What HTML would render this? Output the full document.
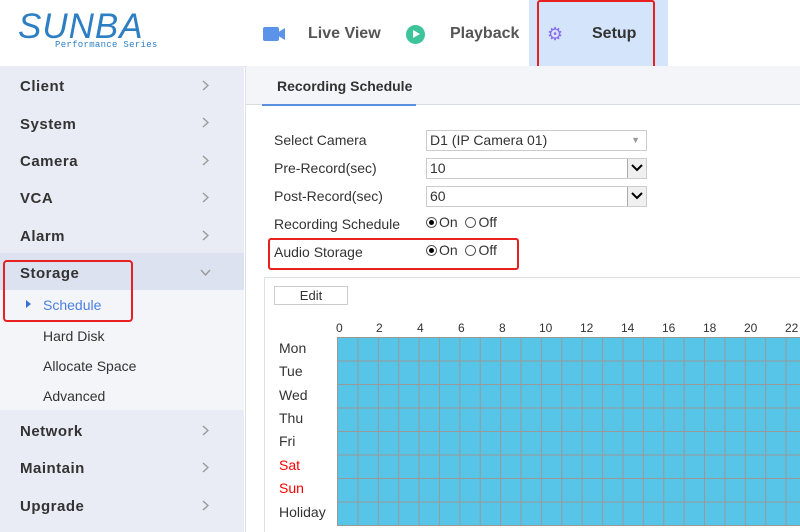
<!DOCTYPE html>
<html><head><meta charset="utf-8"><style>
*{margin:0;padding:0;box-sizing:border-box}
body{width:800px;height:532px;overflow:hidden;background:#fff;font-family:"Liberation Sans","DejaVu Sans",sans-serif;position:relative;color:#333}
.a{position:absolute;white-space:nowrap}
.nav{font-size:16px;font-weight:bold;color:#555}
.side{position:absolute;left:0;top:66px;width:244px;height:466px;background:#e9ecf4}
.si{position:absolute;left:20px;font-size:15px;font-weight:bold;color:#333;letter-spacing:.5px}
.ch{position:absolute;left:202px;width:7px;height:11px}
.sub{position:absolute;left:43px;font-size:14px;color:#333}
.lbl{position:absolute;left:274px;font-size:14px;color:#333}
.box{position:absolute;left:426px;width:221px;height:21px;border:1px solid #ccc;background:#fff;font-size:14px;padding-left:3px;line-height:19px}
.dd{position:absolute;right:0;top:0;width:19px;height:19px;border-left:1px solid #aaa;background:#f0f0f0}
.rad{display:inline-block;width:11px;height:11px;border:1px solid #555;border-radius:50%;vertical-align:-1px;position:relative;margin-right:2px}
.rad.on::after{content:"";position:absolute;left:2px;top:2px;width:5px;height:5px;border-radius:50%;background:#000}
.day{position:absolute;left:279px;font-size:14px;color:#333}
.hr{position:absolute;top:321px;font-size:12px;color:#333}
</style></head><body>
<div class="a" style="left:18px;top:7px;font-size:35px;font-style:italic;color:#2d7fc4;letter-spacing:1px">SUNBA</div>
<div class="a" style="left:55px;top:40px;font-size:9px;color:#2d7fc4;font-family:'Liberation Mono',monospace;letter-spacing:.3px">Performance Series</div>

<div class="a" style="left:263px;top:27px;width:16px;height:14px;background:#5b93ea;border-radius:2px"></div>
<div class="a" style="left:279px;top:28px;width:6px;height:12px;background:#5b93ea;clip-path:polygon(0 30%,100% 0,100% 100%,0 70%)"></div>
<div class="a nav" style="left:308px;top:25px">Live View</div>
<div class="a" style="left:406px;top:25px;width:19px;height:19px;border-radius:50%;background:#3ec39a"></div>
<div class="a" style="left:413px;top:30px;width:0;height:0;border-left:7px solid #fff;border-top:4.5px solid transparent;border-bottom:4.5px solid transparent"></div>
<div class="a nav" style="left:450px;top:25px">Playback</div>
<div class="a" style="left:529px;top:0;width:139px;height:66px;background:#d3e4fb"></div>
<div class="a" style="left:537px;top:0;width:118px;height:69px;border:2px solid #e82020;border-radius:3px"></div>
<div class="a" style="left:547px;top:24px;font-size:18px;color:#8c6df0">⚙</div>
<div class="a nav" style="left:592px;top:25px;color:#333">Setup</div>
<div class="a" style="left:0;top:66px;width:800px;height:1px;background:#e2e5ec"></div>

<div class="side"></div>
<div class="si" style="top:78px">Client</div><svg class="ch" style="top:80px" viewBox="0 0 7 11"><path d="M1 1l5 4.5L1 10" fill="none" stroke="#999" stroke-width="1.4"/></svg>
<div class="si" style="top:116px">System</div><svg class="ch" style="top:117px" viewBox="0 0 7 11"><path d="M1 1l5 4.5L1 10" fill="none" stroke="#999" stroke-width="1.4"/></svg>
<div class="si" style="top:153px">Camera</div><svg class="ch" style="top:155px" viewBox="0 0 7 11"><path d="M1 1l5 4.5L1 10" fill="none" stroke="#999" stroke-width="1.4"/></svg>
<div class="si" style="top:190px">VCA</div><svg class="ch" style="top:192px" viewBox="0 0 7 11"><path d="M1 1l5 4.5L1 10" fill="none" stroke="#999" stroke-width="1.4"/></svg>
<div class="si" style="top:228px">Alarm</div><svg class="ch" style="top:230px" viewBox="0 0 7 11"><path d="M1 1l5 4.5L1 10" fill="none" stroke="#999" stroke-width="1.4"/></svg>
<div class="a" style="left:0;top:253px;width:244px;height:37px;background:#dce2ef"></div>
<div class="a" style="left:0;top:290px;width:244px;height:120px;background:#f4f5f9"></div>
<div class="si" style="top:265px">Storage</div><svg class="a" style="left:200px;top:269px" width="11" height="7" viewBox="0 0 11 7"><path d="M1 1l4.5 5L10 1" fill="none" stroke="#999" stroke-width="1.4"/></svg>
<div class="a" style="left:26px;top:300px;width:0;height:0;border-left:5px solid #3a6fd8;border-top:4px solid transparent;border-bottom:4px solid transparent"></div>
<div class="sub" style="top:297px;color:#4a7fe0">Schedule</div>
<div class="sub" style="top:328px">Hard Disk</div>
<div class="sub" style="top:358px">Allocate Space</div>
<div class="sub" style="top:388px">Advanced</div>
<div class="a" style="left:3px;top:260px;width:130px;height:62px;border:2px solid #e82020;border-radius:4px"></div>
<div class="si" style="top:423px">Network</div><svg class="ch" style="top:425px" viewBox="0 0 7 11"><path d="M1 1l5 4.5L1 10" fill="none" stroke="#999" stroke-width="1.4"/></svg>
<div class="si" style="top:460px">Maintain</div><svg class="ch" style="top:462px" viewBox="0 0 7 11"><path d="M1 1l5 4.5L1 10" fill="none" stroke="#999" stroke-width="1.4"/></svg>
<div class="si" style="top:498px">Upgrade</div><svg class="ch" style="top:500px" viewBox="0 0 7 11"><path d="M1 1l5 4.5L1 10" fill="none" stroke="#999" stroke-width="1.4"/></svg>

<div class="a" style="left:245px;top:66px;width:555px;height:39px;background:#f4f5f9;border-bottom:1px solid #d8dce6;border-left:1px solid #dde0e8"></div>
<div class="a" style="left:277px;top:78px;font-size:14px;font-weight:bold;color:#333">Recording Schedule</div>
<div class="a" style="left:262px;top:104px;width:154px;height:2px;background:#5b8fe0"></div>
<div class="a" style="left:245px;top:105px;width:1px;height:427px;background:#dde0e8"></div>

<div class="lbl" style="top:132px">Select Camera</div>
<div class="box" style="top:130px">D1 (IP Camera 01)<span style="position:absolute;right:6px;top:0;color:#999;font-size:9px">▼</span></div>
<div class="lbl" style="top:160px">Pre-Record(sec)</div>
<div class="box" style="top:158px">10<div class="dd"><svg width="18" height="18" viewBox="0 0 18 18"><path d="M4 6l5 5 5-5" fill="none" stroke="#000" stroke-width="2"/></svg></div></div>
<div class="lbl" style="top:188px">Post-Record(sec)</div>
<div class="box" style="top:186px">60<div class="dd"><svg width="18" height="18" viewBox="0 0 18 18"><path d="M4 6l5 5 5-5" fill="none" stroke="#000" stroke-width="2"/></svg></div></div>
<div class="lbl" style="top:216px">Recording Schedule</div>
<div class="a" style="left:426px;top:214px;font-size:14px"><span class="rad on"></span>On&nbsp;&nbsp;<span class="rad"></span>Off</div>
<div class="lbl" style="top:244px">Audio Storage</div>
<div class="a" style="left:426px;top:242px;font-size:14px"><span class="rad on"></span>On&nbsp;&nbsp;<span class="rad"></span>Off</div>
<div class="a" style="left:268px;top:238px;width:251px;height:32px;border:2px solid #e82020;border-radius:3px"></div>

<div class="a" style="left:264px;top:277px;width:536px;height:255px;border-top:1px solid #dde0e8;border-left:1px solid #dde0e8"></div>
<div class="a" style="left:274px;top:286px;width:74px;height:19px;border:1px solid #ccc;background:#fff;font-size:13px;text-align:center;line-height:17px">Edit</div>

<div class="hr" style="left:336px">0</div><div class="hr" style="left:376px">2</div><div class="hr" style="left:417px">4</div><div class="hr" style="left:458px">6</div><div class="hr" style="left:499px">8</div><div class="hr" style="left:539px">10</div><div class="hr" style="left:580px">12</div><div class="hr" style="left:621px">14</div><div class="hr" style="left:662px">16</div><div class="hr" style="left:703px">18</div><div class="hr" style="left:744px">20</div><div class="hr" style="left:785px">22</div>
<div class="a" style="left:337px;top:337px;width:500px;height:189px;background-color:#56c5e8;border:1px solid #999;background-image:linear-gradient(90deg,#999 1px,transparent 1px),linear-gradient(#999 1px,transparent 1px);background-size:20.4px 100%,100% 23.5px;background-position:-1px 0,0 -1px"></div>
<div class="a" style="left:337px;top:526px;width:463px;height:6px;background:#fff"></div>
<div class="day" style="top:340px">Mon</div>
<div class="day" style="top:363px">Tue</div>
<div class="day" style="top:387px">Wed</div>
<div class="day" style="top:410px">Thu</div>
<div class="day" style="top:433px">Fri</div>
<div class="day" style="top:457px;color:#f00">Sat</div>
<div class="day" style="top:480px;color:#f00">Sun</div>
<div class="day" style="top:504px">Holiday</div>
</body></html>
